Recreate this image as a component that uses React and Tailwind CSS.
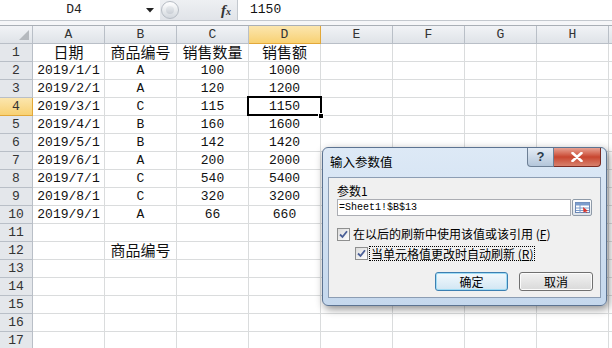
import React from "react";

const cols = ["A", "B", "C", "D", "E", "F", "G", "H"];

const rows = [
  ["日期", "商品编号", "销售数量", "销售额"],
  ["2019/1/1", "A", "100", "1000"],
  ["2019/2/1", "A", "120", "1200"],
  ["2019/3/1", "C", "115", "1150"],
  ["2019/4/1", "B", "160", "1600"],
  ["2019/5/1", "B", "142", "1420"],
  ["2019/6/1", "A", "200", "2000"],
  ["2019/7/1", "C", "540", "5400"],
  ["2019/8/1", "C", "320", "3200"],
  ["2019/9/1", "A", "66", "660"],
  [],
  ["", "商品编号"],
  [],
  [],
  [],
  [],
  [],
];

const isCjk = (s) => /[\u4e00-\u9fff]/.test(s);

const Cell = ({ text, selected }) => (
  <div
    className={
      "relative h-[18px] border-r border-b border-[#dadcdd] flex items-center justify-center text-[#111] whitespace-nowrap " +
      (text && isCjk(text)
        ? "text-[15px] font-['Noto_Sans_CJK_SC',sans-serif]"
        : "text-[13px] font-['Liberation_Mono',monospace]")
    }
  >
    {text}
    {selected && (
      <>
        <div className="absolute z-10 left-[-2px] top-[-2px] right-[-2px] bottom-[-1px] border-2 border-black" />
        <div className="absolute z-10 right-[-4px] bottom-[-4px] w-[6px] h-[6px] bg-black border border-white" />
      </>
    )}
  </div>
);

const Check = () => (
  <div className="w-[13px] h-[13px] border border-[#8e8f8f] bg-linear-to-br from-[#dcdcdc] to-white flex items-center justify-center shrink-0">
    <svg width="9" height="9" viewBox="0 0 9 9">
      <path d="M1 4.5 L3.5 7 L8 1.2" fill="none" stroke="#4a5f97" strokeWidth="1.8" />
    </svg>
  </div>
);

export default function App() {
  return (
    <div className="relative w-[612px] h-[348px] overflow-hidden bg-white font-['Liberation_Mono',monospace]">
      {/* formula bar */}
      <div className="flex h-[21px] border-b border-[#c3c8ce] bg-white">
        <div className="w-[160px] flex items-center">
          <div className="flex-1 text-center text-[13px] text-[#222] pl-[2px]">D4</div>
          <svg width="8" height="5" viewBox="0 0 8 5" className="mr-[6px]">
            <path d="M0 0 H8 L4 4.5 Z" fill="#222" />
          </svg>
        </div>
        <div className="w-[77px] bg-linear-to-b from-[#eef0f3] to-[#e1e4e9] flex items-center">
          <div className="ml-[1px] w-[18px] h-[18px] rounded-full border border-[#b6bcc4] bg-linear-to-b from-white to-[#d3d8de] flex items-center justify-center">
            <div className="w-[8px] h-[8px] rounded-full bg-linear-to-b from-[#e9ecef] to-[#c9ced5]" />
          </div>
          <div className="ml-auto mr-[6px] font-['Liberation_Serif',serif] italic font-bold text-[15px] text-[#333] leading-none">
            f<span className="text-[10px]">x</span>
          </div>
        </div>
        <div className="flex-1 border-l border-[#c3c8ce] flex items-center pl-[12px] text-[13px] text-[#111]">1150</div>
      </div>
      <div className="h-[5px] bg-[#f5f6f8] border-b border-[#a9afb6]" />

      {/* grid */}
      <div className="grid grid-cols-[33px_repeat(8,72px)_1fr]">
        <div className="relative h-[18px] bg-linear-to-b from-[#f1f3f6] to-[#dfe3e8] border-r border-b border-[#b9bfc7]">
          <svg width="10" height="10" viewBox="0 0 10 10" className="absolute right-[3px] bottom-[3px]">
            <path d="M10 0 V10 H0 Z" fill="#b5b9be" />
          </svg>
        </div>
        {cols.map((c) => (
          <div
            key={c}
            className={
              "h-[18px] flex items-center justify-center text-[13px] text-[#333] border-r border-b " +
              (c === "D"
                ? "bg-linear-to-b from-[#fbe6ae] to-[#f8d172] border-[#e2a839]"
                : "bg-linear-to-b from-[#f1f3f6] to-[#dfe3e8] border-[#b9bfc7]")
            }
          >
            {c}
          </div>
        ))}
        <div className="h-[18px] bg-linear-to-b from-[#f1f3f6] to-[#dfe3e8] border-b border-[#b9bfc7]" />

        {rows.map((r, i) => (
          <React.Fragment key={i}>
            <div
              className={
                "h-[18px] flex items-center justify-center text-[13px] text-[#333] border-r border-b " +
                (i === 3
                  ? "bg-linear-to-b from-[#fbe6ae] to-[#f8d172] border-[#e2a839]"
                  : "bg-[#e4e7eb] border-[#b9bfc7]")
              }
            >
              {i + 1}
            </div>
            {cols.map((c, j) => (
              <Cell key={c} text={r[j] || ""} selected={i === 3 && j === 3} />
            ))}
            <div className="h-[18px] border-b border-[#dadcdd]" />
          </React.Fragment>
        ))}
      </div>

      {/* dialog */}
      <div className="absolute z-20 left-[322px] top-[147px] w-[285px] h-[159px] rounded-[6px] border border-[#5c7391] bg-linear-to-b from-[#dde9f6] to-[#c5d8ed] shadow-[2px_3px_8px_rgba(0,0,0,0.45)] px-[5px] pb-[7px] flex flex-col font-['Noto_Sans_CJK_SC',sans-serif] text-[12px] text-black">
        <div className="h-[29px] flex items-start justify-between">
          <div className="mt-[6px] ml-[2px] leading-[16px] text-[12.5px]">输入参数值</div>
          <div className="flex">
            <div className="w-[27px] h-[19px] rounded-bl-[4px] border border-t-0 border-[#6d7f95] bg-linear-to-b from-[#e4ecf5] to-[#b4c6da] flex items-center justify-center text-[#2b3a4c] font-bold font-['Liberation_Sans',sans-serif] text-[13px]">
              ?
            </div>
            <div className="w-[47px] h-[19px] rounded-br-[4px] border border-t-0 border-l-0 border-[#7b2a22] bg-linear-to-b from-[#e7a193] via-[#c8452f] to-[#d7806c] flex items-center justify-center">
              <svg width="12" height="10" viewBox="0 0 12 10">
                <path d="M1.5 1 L10.5 9 M10.5 1 L1.5 9" stroke="white" strokeWidth="2.6" strokeLinecap="round" />
              </svg>
            </div>
          </div>
        </div>
        <div className="flex-1 border border-[#8c9db3] bg-[#f0f0f0] pt-[5px] px-[8px] flex flex-col">
          <div className="leading-[15px]">参数1</div>
          <div className="flex h-[17px] mt-[1px]">
            <div className="flex-1 border border-[#abadb3] bg-white flex items-center pl-[1px] font-['Liberation_Mono',monospace] text-[10px] leading-none">
              =Sheet1!$B$13
            </div>
            <div className="w-[20px] ml-[1px] border border-[#8e9aa8] rounded-[2px] bg-linear-to-b from-white to-[#dde3ea] flex items-center justify-center">
              <svg width="15" height="11" viewBox="0 0 15 11">
                <rect x="0.5" y="0.5" width="14" height="10" fill="#fff" stroke="#6b86b3" />
                <rect x="0.5" y="0.5" width="14" height="3" fill="#7b9ccc" />
                <path d="M1 6 H14 M1 8.5 H14 M5 3 V11" stroke="#7b9ccc" strokeWidth="1" />
                <path d="M8 5 L13 9 L11 9.3 L12.5 11 L11.5 11 L10.2 9.6 L8.6 10.8 Z" fill="#d8322a" />
              </svg>
            </div>
          </div>
          <div className="flex items-center mt-[11px] h-[14px]">
            <Check />
            <div className="ml-[3px] leading-[14px] whitespace-nowrap">在以后的刷新中使用该值或该引用 (<span className="underline">F</span>)</div>
          </div>
          <div className="flex items-center mt-[5px] h-[15px] pl-[18px]">
            <Check />
            <div className="ml-[1px] leading-[13px] px-[1px] border border-dotted border-black whitespace-nowrap">
              当单元格值更改时自动刷新 (<span className="underline">R</span>)
            </div>
          </div>
          <div className="flex justify-end mt-[11px] mr-[-1px]">
            <div className="w-[73px] h-[19px] rounded-[3px] border border-[#3c7fb1] bg-linear-to-b from-[#f2f9fd] to-[#d2e6f3] shadow-[inset_0_0_0_1px_#9fdcf5] flex items-center justify-center">
              确定
            </div>
            <div className="w-[74px] h-[19px] ml-[11px] rounded-[3px] border border-[#707070] bg-linear-to-b from-[#f2f2f2] to-[#d9d9d9] shadow-[inset_0_0_0_1px_#fcfcfc] flex items-center justify-center">
              取消
            </div>
          </div>
        </div>
      </div>
    </div>
  );
}
